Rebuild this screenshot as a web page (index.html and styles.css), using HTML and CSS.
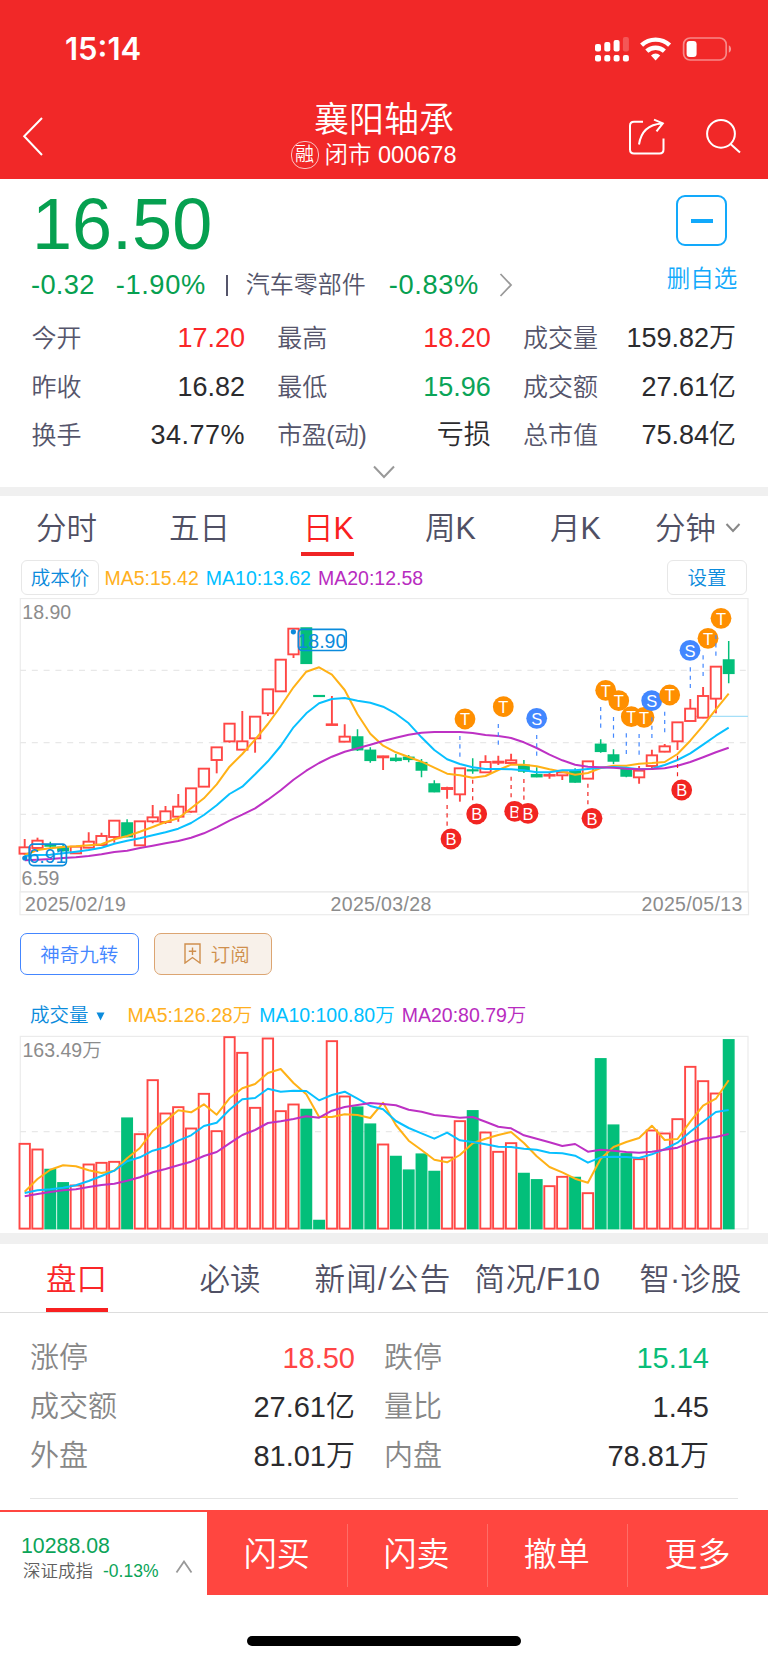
FILE: index.html
```html
<!DOCTYPE html>
<html lang="zh-CN">
<head>
<meta charset="utf-8">
<title>襄阳轴承 000678</title>
<link rel="stylesheet" href="styles.css">
</head>
<body>
<header class="header">
  <div class="status">
    <span class="clock">15:14</span>
    <svg class="status-icons" width="140" height="28" viewBox="594 35 140 28" fill="#fff">
      <rect x="595" y="44" width="6" height="7.5" rx="2"/><rect x="604.3" y="42" width="6" height="9.5" rx="2"/><rect x="613.6" y="40" width="6" height="11.5" rx="2"/><rect x="622.9" y="37" width="6" height="14.5" rx="2" opacity=".22"/>
      <rect x="595" y="55" width="6" height="6.4" rx="2"/><rect x="604.3" y="55" width="6" height="6.4" rx="2"/><rect x="613.6" y="55" width="6" height="6.4" rx="2"/><rect x="622.9" y="55" width="6" height="6.4" rx="2"/>
      <g fill="none" stroke="#fff" stroke-width="4.4"><path d="M641.6 45.2a20.4 20.4 0 0 1 28 0"/><path d="M646.8 51.2a12.8 12.8 0 0 1 17.6 0"/></g>
      <path d="M651 55.4a6.6 6.6 0 0 1 9.2 0L655.6 60.6z"/>
      <rect x="683.6" y="38" width="42.6" height="22" rx="6.5" fill="none" stroke="#fff" stroke-width="1.7" opacity=".45"/>
      <rect x="686.6" y="41" width="10" height="16" rx="3.2"/><path d="M728.8 45.3c3 1.5 3 6 0 7.5z" opacity=".5"/>
    </svg>
  </div>
  <div class="nav">
    <svg class="back" width="22" height="40" viewBox="22 116 22 40"><path d="M42 118 24.200 136.300 42 155"/></svg>
    <div class="heading">
      <h1>襄阳轴承</h1>
      <div class="sub"><span class="badge">融</span><span>闭市 000678</span></div>
    </div>
    <svg class="nav-icons" width="114" height="40" viewBox="627 116 114 40"><path d="M643 121.700H634q-4 0-4 4V149.400q0 4 4 4H659.500q4 0 4-4V138.500M639 144.500C640.500 134.500 646 124.500 662 123.500M654 119.600 662.800 123.300 656.500 131.300"/><circle cx="721" cy="133.800" r="13.900"/><path d="M730.500 144 740 152.600"/></svg>
  </div>
</header>

<section class="quote">
  <div class="quote-top">
    <div>
      <div class="price">16.50</div>
      <div class="change"><span>-0.32</span><span class="pct">-1.90%</span><i></i><b>汽车零部件</b><span class="pct">-0.83%</span><svg width="14" height="24"><path d="M1.500 1 12 12 1.500 23"/></svg></div>
    </div>
    <div class="watch"><span class="minus"></span><span>删自选</span></div>
  </div>
  <dl class="stats">
    <div><dt>今开</dt><dd class="up">17.20</dd></div><div><dt>最高</dt><dd class="up">18.20</dd></div><div><dt>成交量</dt><dd>159.82万</dd></div>
    <div><dt>昨收</dt><dd>16.82</dd></div><div><dt>最低</dt><dd class="down">15.96</dd></div><div><dt>成交额</dt><dd>27.61亿</dd></div>
    <div><dt>换手</dt><dd class="ratio">34.77%</dd></div><div><dt class="pe">市盈(动)</dt><dd>亏损</dd></div><div><dt>总市值</dt><dd>75.84亿</dd></div>
  </dl>
  <svg class="expand" width="24" height="14"><path d="M2 1.500 12 12 22 1.500"/></svg>
</section>

<section class="kline">
  <nav class="periods"><span>分时</span><span>五日</span><span class="active">日K</span><span>周K</span><span>月K</span><span>分钟<svg width="16" height="10"><path d="M1.500 1 8 8 14.500 1"/></svg></span></nav>
  <div class="legend"><span class="chip cost">成本价</span><span class="ma5">MA5:15.42</span><span class="ma10">MA10:13.62</span><span class="ma20">MA20:12.58</span><span class="chip setting">设置</span></div>
  <svg id="price-chart" class="price-chart" width="768" height="318" viewBox="0 598 768 318"></svg>
  <div class="tools">
    <span class="tool blue">神奇九转</span>
    <span class="tool gold"><svg width="17" height="21"><path d="M1 1H16V20L8.500 14.500 1 20ZM8.500 4.500V12M4.800 8.200H12.200"/></svg>订阅</span>
  </div>
  <div class="legend volume"><span class="metric">成交量</span><svg class="tri" width="9" height="9"><path d="M.5.5H8.500L4.500 8.500Z"/></svg><span class="ma5">MA5:126.28万</span><span class="ma10">MA10:100.80万</span><span class="ma20">MA20:80.79万</span></div>
  <svg id="volume-chart" class="volume-chart" width="768" height="197" viewBox="0 1035 768 197"></svg>
</section>

<section class="board">
  <nav class="board-tabs"><span class="active">盘口</span><span>必读</span><span class="slash news">新闻/公告</span><span class="slash">简况/F10</span><span>智·诊股</span></nav>
  <dl class="depth">
    <div><dt>涨停</dt><dd class="hi">18.50</dd></div><div><dt>跌停</dt><dd class="lo">15.14</dd></div>
    <div><dt>成交额</dt><dd>27.61亿</dd></div><div><dt>量比</dt><dd>1.45</dd></div>
    <div><dt>外盘</dt><dd>81.01万</dd></div><div><dt>内盘</dt><dd>78.81万</dd></div>
  </dl>
</section>

<footer class="actions">
  <div class="index">
    <div><div class="index-value">10288.08</div><div class="index-name">深证成指<em>-0.13%</em></div></div>
    <svg width="18" height="14"><path d="M1.500 12.500 9 1.500 16.500 12.500"/></svg>
  </div>
  <button>闪买</button><button>闪卖</button><button>撤单</button><button>更多</button>
</footer>
<div class="home"></div>
<script src="chart.js"></script>
</body>
</html>
```
FILE: styles.css
```css
* { box-sizing: border-box; }
body { margin: 0; width: 768px; height: 1663px; overflow: hidden; background: #fff; color: #2b2b2e; font-family: "Liberation Sans", "Noto Sans CJK SC", sans-serif; font-weight: 350; white-space: nowrap; }
svg { display: block; flex: none; }
svg path { fill: none; }
dl, dd, h1 { margin: 0; font-weight: inherit; }

.header { height: 179px; background: #f12828; color: #fff; }
.status { display: flex; justify-content: space-between; align-items: center; height: 98px; padding: 0 34px 0 65px; }
.clock { font: 600 31px/36px Inter, sans-serif; }
.status-icons path:not([fill]) { fill: #fff; }
.status-icons g path:not([fill]) { fill: none; }
.nav { display: grid; grid-template-columns: 22px 1fr 114px; height: 81px; padding: 0 27px 0 22px; }
.back, .nav-icons { margin-top: 18px; fill: none; stroke: #fff; stroke-width: 2; }
.heading { display: flex; flex-direction: column; align-items: center; padding: 2px 0 0 97px; }
.heading h1 { font-size: 35px; line-height: 40px; }
.sub { display: flex; align-items: center; gap: 6px; margin: 0 0 0 -21px; font-size: 23.5px; line-height: 30px; }
.badge { display: grid; place-items: center; width: 28px; height: 28px; border: 1px solid rgba(255,255,255,.7); border-radius: 13px; font-size: 19px; line-height: 26px; }

.quote { height: 317px; border-bottom: 9px solid #f0f0f0; }
.quote-top { display: flex; justify-content: space-between; height: 134px; padding: 7px 30px 0 31px; }
.price { height: 76px; padding-left: 1px; font-size: 72px; line-height: 77px; color: #06a050; }
.change { display: flex; align-items: center; height: 30px; margin-top: 8px; font-size: 27.3px; line-height: 30px; letter-spacing: .3px; color: #06a050; }
.change .pct { margin-left: 21px; letter-spacing: .6px; }
.change i { width: 2px; height: 21px; margin: 0 18px 0 20px; background: #55556b; }
.change b { font-size: 24px; font-weight: inherit; letter-spacing: 0; color: #55556b; }
.change b + .pct { margin-left: 23px; }
.change svg { margin-left: 20px; stroke: #999; stroke-width: 1.8; }
.watch { display: flex; flex-direction: column; align-items: center; width: 72px; margin-top: 9px; gap: 17px; color: #12a9fb; font-size: 23.5px; line-height: 32px; }
.minus { display: grid; place-items: center; width: 51px; height: 51px; margin-left: -1px; border: 2px solid; border-radius: 9px; }
.minus::after { content: ""; width: 22px; height: 4px; background: currentColor; }
.stats { display: grid; grid-template-columns: 213.500px 213.500px 213px; grid-auto-rows: 48.400px; column-gap: 32.300px; height: 160px; padding: 1px 0 0 31.500px; line-height: 48px; }
.stats div, .depth div { display: flex; justify-content: space-between; align-items: center; }
.stats dt { font-size: 25px; color: #55556b; }
.stats dt.pe { letter-spacing: -.5px; }
.stats dd { font-size: 27px; }
.stats .ratio { letter-spacing: .5px; }
.up { color: #fa2628; }
.down { color: #0ba458; }
.expand { margin: -8px auto 0; stroke: #999; stroke-width: 2; }

.kline { height: 737px; }
.periods { display: grid; grid-template-columns: 133px 137px 119px 125px 105px 113px; height: 62px; padding-left: 36px; font-size: 30.500px; line-height: 64px; color: #505064; }
.periods .active { width: 53px; height: 60px; margin-left: -5px; padding-left: 2px; border-bottom: 4.500px solid #f02425; color: #fa2020; }
.periods span:last-child { display: flex; align-items: center; gap: 9px; }
.periods svg { stroke: #888; stroke-width: 2; }
.legend { display: flex; align-items: center; height: 40px; padding: 0 21px 0 21px; font-size: 19.500px; line-height: 32px; }
.chip { display: grid; place-items: center; height: 35px; margin-top: -2px; border: 1.500px solid #e7e7e7; border-radius: 6px; color: #0b8bdc; line-height: 34px; }
.cost { width: 78px; margin-right: 5.500px; }
.setting { width: 80px; margin-left: auto; }
.ma5 { color: #ffb020; }
.ma10 { margin-left: 7px; color: #00bfff; }
.ma20 { margin-left: 7px; color: #b82cc0; }
.volume { height: 40px; margin-top: 20px; padding-left: 30px; }
.metric { margin-right: 7px; color: #0b8bdc; }
.tri { margin: 3px 23px 0 0; }
.tri path { fill: #0b8bdc; }
.tools { display: flex; gap: 15px; margin-top: 17px; padding-left: 20px; }
.tool { display: flex; justify-content: center; align-items: center; width: 118.500px; height: 42px; padding-top: 2px; border: 1.500px solid; border-radius: 7px; font-size: 19.500px; line-height: 38px; }
.blue { color: #4486ff; }
.gold { gap: 10px; padding-left: 8px; color: #cf8f4d; border-color: #dca572; background: #f8f1ea; }
.gold svg { margin-top: -3px; stroke: #cf8f4d; stroke-width: 1.400; }

.board { height: 277px; border-top: 11px solid #f0f0f0; }
.board-tabs { display: grid; grid-template-columns: 153.500px 115px 160px 165px 1fr; height: 69px; padding-left: 46px; border-bottom: 1px solid #ddd; font-size: 30.500px; line-height: 70px; color: #505064; }
.board-tabs .active { width: 62px; height: 68px; border-bottom: 4px solid #f82020; color: #fa2628; }
.slash { letter-spacing: .7px; }
.news { letter-spacing: 1.300px; }
.depth { display: grid; grid-template-columns: 325px 325px; grid-auto-rows: 49.300px; column-gap: 29px; height: 186px; margin: 0 30px; padding-top: 20.500px; border-bottom: 1px solid #e4e4e4; font-size: 29px; line-height: 49px; }
.depth dt { color: #878787; }
.hi { color: #ff4545; }
.lo { color: #09bd78; }
.actions { display: grid; grid-template-columns: 207px 139.500px 140px 140.500px 1fr; height: 85px; background: #ff4640; }
.index { display: flex; justify-content: space-between; margin-top: 2px; padding: 19px 14px 0 21px; background: #fff; }
.index svg { margin-top: 29px; stroke: #999; stroke-width: 1.800; }
.index-value { font-size: 21.300px; line-height: 30px; color: #0ba458; }
.index-name { padding-left: 2px; font-size: 17.500px; line-height: 21px; color: #606060; }
.index-name em { margin-left: 10px; font-style: normal; color: #0ba458; }
.actions button { position: relative; padding: 5px 0 0; border: 0; background: none; color: #fff; font: inherit; font-size: 33px; line-height: 80px; }
.actions button + button::before { content: ""; position: absolute; left: 0; top: 14px; width: 1px; height: 63px; background: #ff6d67; }
.home { width: 274px; height: 10px; margin: 41px auto 0; border-radius: 5px; background: #000; }

.frame { fill: none; stroke: #ebebeb; stroke-width: 1.200; }
.grid { stroke: #e8e8e8; stroke-width: 1.200; stroke-dasharray: 6 5.800; }
.axis { fill: #8c8c8c; font-size: 19.500px; }
.date { letter-spacing: .35px; }
.rise { fill: #fff; stroke: #ff4745; stroke-width: 1.900; }
.fall { fill: #03bf7a; stroke: #03bf7a; stroke-width: 1.500; }
.line { stroke-width: 2; stroke-linejoin: round; }
.l5 { stroke: #ffb116; }
.l10 { stroke: #08c0ff; }
.l20 { stroke: #bd31c4; }
.callout { fill: none; stroke: #0b8bdc; stroke-width: 1.700; }
.callout-text { fill: #0b8bdc; font-size: 19.500px; }
.mark-text { fill: #fff; font-size: 16.500px; text-anchor: middle; }
```
FILE: chart.js
```js
const STEP = 12.8, X0 = 24.7, BASE = 590;
const cx = i => X0 + i * STEP;
const falls = new Set([2, 3, 8, 22, 23, 26, 27, 29, 30, 31, 32, 35, 39, 40, 43, 45, 46, 47, 55]);
const cls = i => falls.has(i) ? 'fall' : 'rise';
// Each candle: high, body top, body bottom, low, in thirds of a pixel below BASE
const candles = [[747,772,791,795],[743,752,774,774],[755,766,768,774],[762,772,782,784],[770,770,790,792],[727,755,773,775],[728,738,765,768],[692,692,741,758],[688,699,740,742],[694,694,766,768],[645,682,694,700],[648,664,696,702],[612,650,680,695],[595,595,665,668],[536,536,590,590],[472,472,510,550],[401,401,454,458],[363,454,479,479],[380,380,445,488],[298,298,370,378],[209,209,304,306],[116,116,193,204],[114,114,220,220],[317,317,319,319],[318,403,405,406],[403,440,455,457],[418,441,479,483],[472,481,511,518],[497,499,502,540],[492,505,511,515],[495,502,508,517],[507,518,540,562],[571,582,605,607],[590,594,597,626],[535,535,613,635],[505,540,542,551],[496,516,547,549],[497,515,518,525],[491,511,519,523],[510,526,543,549],[532,554,560,562],[547,555,557,566],[546,547,556,570],[535,543,576,578],[514,514,566,566],[448,463,484,488],[478,495,513,522],[530,539,558,562],[528,542,562,581],[479,496,528,537],[462,469,485,487],[397,397,454,480],[327,356,393,393],[291,318,383,385],[230,230,326,370],[153,210,250,280]];
const priceMA = {
  l5: [795,780,775,771,769,766,763,748,738,725,711,696,685,655,625,583,530,492,449,402,349,292,245,232,254,300,373,431,467,487,501,515,533,551,556,563,558,540,524,524,529,538,545,554,549,534,527,527,521,519,516,492,452,407,358,311],
  l10: [798,795,794,790,785,780,773,761,752,745,736,727,716,699,675,646,612,590,553,514,468,412,370,340,327,324,332,338,350,371,400,442,480,508,522,532,537,537,538,541,547,547,541,541,537,533,531,533,538,536,525,510,490,464,437,413],
  l20: [811,809,807,804,802,798,793,786,782,774,767,760,753,743,730,712,692,674,655,629,601,569,542,519,500,485,475,464,453,443,434,428,426,426,426,429,435,438,444,457,474,494,511,524,530,532,533,536,538,537,535,527,516,502,487,473]
};
const volumes = [370,387,447,487,495,432,427,424,293,341,179,279,260,324,220,332,50,97,262,54,272,252,267,600,62,228,260,311,372,408,449,401,453,411,302,271,336,394,368,459,478,497,469,471,518,115,314,400,416,330,339,296,139,182,219,58];
const volumeMA = {
  l5: [515,477,449,436,439,451,459,452,415,384,333,303,271,277,253,284,235,205,192,159,147,189,223,291,291,283,285,294,248,315,362,390,419,427,405,370,356,345,336,369,409,441,457,476,488,416,381,366,354,317,360,357,305,257,236,181],
  l10: [519,511,508,503,496,483,468,452,424,412,392,382,362,346,318,308,269,238,234,206,215,212,213,241,225,215,236,258,268,303,324,340,356,338,361,366,373,380,381,386,389,398,400,407,428,412,410,411,414,403,387,368,335,305,276,270],
  l20: [529,522,516,511,508,501,495,491,482,472,457,447,436,425,408,396,370,345,330,309,304,297,289,293,272,261,255,249,252,256,269,275,285,289,293,291,305,320,325,346,356,367,378,372,395,389,392,396,398,395,389,383,367,356,351,342]
};
// Trade marks: letter, centre x, centre y, candle index, start of the dashed leader
const marks = [['T',465,719,34,438],['B',451,839,33,645],['B',476.7,814,35,569],['T',503.3,706.7,37,402],['B',514.7,811.3,38,560],['B',528,813.3,39,567],['S',536.7,718.3,40,435],['B',592,818.3,44,581],['T',605.7,690.3,45,351],['T',618.7,700.7,46,381],['T',631.3,716.7,47,430],['T',644,717.3,48,432],['S',651.7,700.7,49,382],['T',669.7,695,50,365],['B',681.7,790,51,497],['S',690,650.3,52,232],['T',708,638.3,53,196],['T',721,618.3,54,135]];
const tone = { T: '#ff8f00', B: '#f22522', S: '#4287ff' };

const hline = (y, c) => `<path class="${c}" d="M20 ${y}H748"/>`;
const lines = (set, base) => Object.entries(set).map(([k, v]) => `<path class="line ${k}" d="M${v.map((y, i) => `${cx(i).toFixed(1)} ${(base + y / 3).toFixed(1)}`).join('L')}"/>`).join('');

let p = `<rect class="frame" x="20.3" y="598.5" width="727.7" height="293.3"/><rect class="frame" x="20" y="891.8" width="728.5" height="22.9"/>`;
p += [670.4, 742.6, 814.4].map(y => hline(y, 'grid')).join('');
p += `<path d="M690 716.4H748" stroke="#a5dff8" stroke-width="1.2"/>`;
candles.forEach(([h, t, b, l], i) => {
  const x = cx(i), y = v => BASE + v / 3;
  p += `<g class="${cls(i)}"><path d="M${x} ${y(h)}V${y(t)}M${x} ${y(b)}V${y(l)}"/><rect x="${x - 5.2}" y="${y(t)}" width="10.4" height="${(b - t) / 3}"/></g>`;
});
p += lines(priceMA, BASE);
marks.forEach(([s, x, y]) => {
  p += `<circle cx="${x}" cy="${y}" r="10.4" fill="${tone[s]}"/><text class="mark-text" x="${x}" y="${y + 6.2}">${s}</text>`;
});
marks.forEach(([s, , , i, y]) => {
  p += `<path d="M${cx(i)} ${BASE + y / 3}v20.7" stroke="${s === 'B' ? '#f22522' : '#4287ff'}" stroke-width="1.2" stroke-dasharray="4.1 4.2"/>`;
});
p += `<circle cx="24.8" cy="858" r="2.6" fill="#0b8bdc"/><rect class="callout" x="29.2" y="844.2" width="37.2" height="21.4" rx="4"/><text class="callout-text" x="28.5" y="862.8">6.91</text>
<circle cx="293.4" cy="631.8" r="2.6" fill="#0b8bdc"/><rect class="callout" x="298.4" y="629.3" width="47.8" height="21.2" rx="4"/><text class="callout-text" x="297.5" y="648.2">18.90</text>
<text class="axis" x="22.3" y="619.2">18.90</text><text class="axis" x="21.5" y="884.8">6.59</text>
<text class="axis date" x="25" y="911.2">2025/02/19</text><text class="axis date" x="330.5" y="911.2">2025/03/28</text><text class="axis date" x="641.5" y="911.2">2025/05/13</text>`;
document.getElementById('price-chart').innerHTML = p;

let v = `<rect class="frame" x="20.3" y="1036.4" width="727.7" height="192.4"/>${hline(1131.7, 'grid')}`;
volumes.forEach((t, i) => {
  const y = 1020 + t / 3 + .5;
  v += `<rect class="${cls(i)}" x="${cx(i) - 5.2}" y="${y}" width="10.4" height="${1228.6 - y}"/>`;
});
v += lines(volumeMA, 1020) + `<text class="axis" x="22.5" y="1057">163.49万</text>`;
document.getElementById('volume-chart').innerHTML = v;
```
